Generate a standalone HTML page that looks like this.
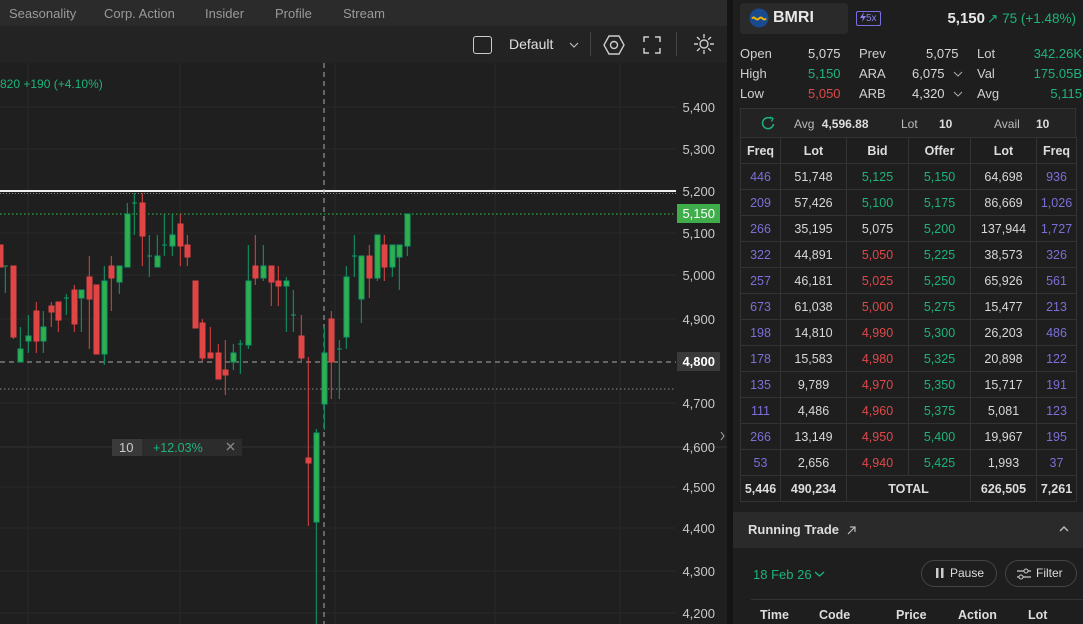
<!DOCTYPE html>
<html><head><meta charset="utf-8"><style>
*{box-sizing:border-box;margin:0;padding:0}
body{width:1083px;height:624px;overflow:hidden;background:#141414;font-family:"Liberation Sans",sans-serif;color:#ddd;position:relative;font-size:13px}
.abs{position:absolute;white-space:nowrap}
.tabs{left:0;top:0;width:727px;height:26px;background:#2b2b2b;}
.tabs span{position:absolute;top:6px;font-size:13px;color:#9a9a9a}
.tb{left:0;top:26px;width:727px;height:37px;background:#232323}
.chart{left:0;top:63px;width:727px;height:561px;background:#1f1f1f}
.rp{left:733px;top:0;width:350px;height:624px;background:#1e1e1e}
.q td{height:26px;border:1px solid #333;text-align:center;font-size:12.5px}
table{border-collapse:collapse}
.p{color:#7b6fd8}.g{color:#1db47a}.r{color:#e04848}.w{color:#d8d8d8}
.lbl{color:#d0d0d0}
</style></head><body>
<div class="abs tabs"><span style="left:9px">Seasonality</span><span style="left:104px">Corp. Action</span><span style="left:205px">Insider</span><span style="left:275px">Profile</span><span style="left:343px">Stream</span></div>
<div class="abs tb">
<div class="abs" style="left:473px;top:10px;width:19px;height:18px;border:1.5px solid #ccc;border-radius:3px"></div>
<span class="abs" style="left:509px;top:10px;font-size:14px;color:#e0e0e0">Default</span>
<svg class="abs" style="left:568px;top:14px" width="12" height="10"><path d="M2 3l4 4 4-4" stroke="#bbb" fill="none" stroke-width="1.2"/></svg>
<div class="abs" style="left:590px;top:6px;width:1px;height:24px;background:#444"></div>
<svg class="abs" style="left:601px;top:7px" width="26" height="24"><path d="M8 3h10l5 9-5 9H8L3 12z" stroke="#ccc" fill="none" stroke-width="1.4"/><circle cx="13" cy="12" r="3.5" stroke="#ccc" fill="none" stroke-width="1.4"/></svg>
<svg class="abs" style="left:642px;top:9px" width="20" height="20"><path d="M2 7V2h5M13 2h5v5M18 13v5h-5M7 18H2v-5" stroke="#ccc" fill="none" stroke-width="1.5"/></svg>
<div class="abs" style="left:676px;top:6px;width:1px;height:24px;background:#444"></div>
<svg class="abs" style="left:692px;top:6px" width="24" height="24"><circle cx="12" cy="12" r="4" stroke="#ccc" fill="none" stroke-width="1.4"/><path d="M12 2v4M12 18v4M2 12h4M18 12h4M5 5l2.8 2.8M16.2 16.2L19 19M5 19l2.8-2.8M16.2 7.8L19 5" stroke="#ccc" stroke-width="1.4"/></svg>
</div>
<div class="abs chart"></div>
<svg class="abs" style="left:0;top:63px" width="727" height="561" viewBox="0 63 727 561">
<g stroke="#292929" stroke-width="1">
<line x1="0" y1="107" x2="676" y2="107"/><line x1="0" y1="149" x2="676" y2="149"/><line x1="0" y1="233" x2="676" y2="233"/><line x1="0" y1="275" x2="676" y2="275"/><line x1="0" y1="319" x2="676" y2="319"/><line x1="0" y1="403" x2="676" y2="403"/><line x1="0" y1="447" x2="727" y2="447" stroke="#333"/><line x1="0" y1="487" x2="676" y2="487"/><line x1="0" y1="528" x2="676" y2="528"/><line x1="0" y1="571" x2="676" y2="571"/><line x1="0" y1="613" x2="676" y2="613"/>
<line x1="28" y1="63" x2="28" y2="624"/><line x1="180" y1="63" x2="180" y2="624"/><line x1="335" y1="63" x2="335" y2="624"/><line x1="495" y1="63" x2="495" y2="624"/><line x1="620" y1="63" x2="620" y2="624"/>
</g>
<line x1="0" y1="191" x2="676" y2="191" stroke="#eee" stroke-width="2"/>
<line x1="0" y1="193.5" x2="676" y2="193.5" stroke="#888" stroke-dasharray="1 2"/>
<line x1="0" y1="214" x2="676" y2="214" stroke="#3bbf4d" stroke-dasharray="1.5 2.5"/>
<line x1="0" y1="389" x2="676" y2="389" stroke="#888" stroke-dasharray="1.5 2.5"/>
<line x1="0" y1="362" x2="676" y2="362" stroke="#aaa" stroke-dasharray="5 4"/>
<line x1="324" y1="63" x2="324" y2="624" stroke="#aaa" stroke-dasharray="5 4"/>
<g stroke="#e04545" stroke-width="1" fill="#e04545">
<rect x="-2" y="245" width="5" height="22"/>
<line x1="13.3" y1="266" x2="13.3" y2="339"/><rect x="11" y="266" width="5" height="71"/>
<line x1="36.3" y1="302" x2="36.3" y2="353"/><rect x="34" y="311" width="5" height="30"/>
<line x1="51.3" y1="302" x2="51.3" y2="327"/><rect x="49" y="306" width="5" height="6"/>
<line x1="58.3" y1="302" x2="58.3" y2="332"/><rect x="56" y="302" width="5" height="18"/>
<line x1="74.3" y1="285" x2="74.3" y2="332"/><rect x="72" y="290" width="5" height="34"/>
<line x1="89.3" y1="256" x2="89.3" y2="349"/><rect x="87" y="277" width="5" height="22"/>
<rect x="94" y="285" width="5" height="69"/>
<line x1="111.3" y1="256" x2="111.3" y2="311"/><rect x="109" y="266" width="5" height="12"/>
<line x1="142.3" y1="193" x2="142.3" y2="266"/><rect x="140" y="203" width="5" height="33"/>
<line x1="180.3" y1="214" x2="180.3" y2="266"/><rect x="178" y="224" width="5" height="22"/>
<line x1="187.3" y1="235" x2="187.3" y2="266"/><rect x="185" y="245" width="5" height="12"/>
<rect x="193" y="281" width="5" height="47"/>
<line x1="202.3" y1="319" x2="202.3" y2="361"/><rect x="200" y="323" width="5" height="35"/>
<line x1="210.3" y1="327" x2="210.3" y2="358"/><rect x="208" y="353" width="5" height="5"/>
<line x1="218.3" y1="344" x2="218.3" y2="379"/><rect x="216" y="353" width="5" height="26"/>
<line x1="225.3" y1="340" x2="225.3" y2="395"/><rect x="223" y="370" width="5" height="5"/>
<line x1="255.3" y1="235" x2="255.3" y2="285"/><rect x="253" y="266" width="5" height="12"/>
<line x1="271.3" y1="266" x2="271.3" y2="306"/><rect x="269" y="266" width="5" height="16"/>
<line x1="278.3" y1="266" x2="278.3" y2="306"/><rect x="276" y="281" width="5" height="5"/>
<line x1="301.3" y1="315" x2="301.3" y2="361"/><rect x="299" y="336" width="5" height="22"/>
<line x1="308.3" y1="357" x2="308.3" y2="526"/><rect x="306" y="458" width="5" height="5"/>
<line x1="331.3" y1="311" x2="331.3" y2="399"/><rect x="329" y="319" width="5" height="43"/>
<line x1="369.3" y1="245" x2="369.3" y2="298"/><rect x="367" y="256" width="5" height="22"/>
<line x1="384.3" y1="235" x2="384.3" y2="281"/><rect x="382" y="245" width="5" height="22"/>
</g>
<g stroke="#0f9d6a" stroke-width="1" fill="#2fb04a">
<line x1="5.3" y1="266" x2="5.3" y2="293"/><line x1="3" y1="266" x2="8" y2="266"/>
<line x1="20.3" y1="327" x2="20.3" y2="362"/><rect x="18" y="349" width="5" height="13"/>
<line x1="28.3" y1="315" x2="28.3" y2="353"/><rect x="26" y="336" width="5" height="5"/>
<line x1="43.3" y1="311" x2="43.3" y2="353"/><rect x="41" y="327" width="5" height="14"/>
<line x1="66.3" y1="294" x2="66.3" y2="315"/><line x1="64" y1="298" x2="69" y2="298"/>
<line x1="81.3" y1="290" x2="81.3" y2="332"/><rect x="79" y="290" width="5" height="8"/>
<line x1="104.3" y1="266" x2="104.3" y2="365"/><rect x="102" y="281" width="5" height="73"/>
<line x1="119.3" y1="266" x2="119.3" y2="294"/><rect x="117" y="266" width="5" height="16"/>
<line x1="127.3" y1="203" x2="127.3" y2="267"/><rect x="125" y="214" width="5" height="53"/>
<line x1="134.3" y1="193" x2="134.3" y2="235"/><line x1="132" y1="203" x2="137" y2="203"/>
<line x1="149.3" y1="235" x2="149.3" y2="277"/><line x1="147" y1="256" x2="152" y2="256"/>
<line x1="157.3" y1="235" x2="157.3" y2="267"/><rect x="155" y="256" width="5" height="11"/>
<line x1="164.3" y1="214" x2="164.3" y2="256"/><line x1="162" y1="245" x2="167" y2="245"/>
<line x1="172.3" y1="214" x2="172.3" y2="256"/><rect x="170" y="235" width="5" height="11"/>
<line x1="233.3" y1="344" x2="233.3" y2="370"/><rect x="231" y="353" width="5" height="9"/>
<line x1="240.3" y1="340" x2="240.3" y2="374"/><line x1="238" y1="344" x2="243" y2="344"/>
<line x1="248.3" y1="245" x2="248.3" y2="349"/><rect x="246" y="281" width="5" height="64"/>
<line x1="263.3" y1="245" x2="263.3" y2="281"/><rect x="261" y="266" width="5" height="12"/>
<line x1="286.3" y1="277" x2="286.3" y2="332"/><rect x="284" y="281" width="5" height="5"/>
<line x1="293.3" y1="290" x2="293.3" y2="332"/><line x1="291" y1="315" x2="296" y2="315"/>
<line x1="316.3" y1="429" x2="316.3" y2="624"/><rect x="314" y="433" width="5" height="89"/>
<line x1="324.3" y1="327" x2="324.3" y2="430"/><rect x="322" y="353" width="5" height="51"/>
<line x1="339.3" y1="340" x2="339.3" y2="399"/><line x1="337" y1="349" x2="342" y2="349"/>
<line x1="346.3" y1="266" x2="346.3" y2="349"/><rect x="344" y="277" width="5" height="60"/>
<line x1="354.3" y1="235" x2="354.3" y2="277"/><line x1="352" y1="256" x2="357" y2="256"/>
<line x1="361.3" y1="256" x2="361.3" y2="323"/><rect x="359" y="256" width="5" height="43"/>
<line x1="377.3" y1="235" x2="377.3" y2="281"/><rect x="375" y="235" width="5" height="43"/>
<line x1="392.3" y1="245" x2="392.3" y2="277"/><rect x="390" y="245" width="5" height="22"/>
<line x1="399.3" y1="245" x2="399.3" y2="290"/><rect x="397" y="245" width="5" height="12"/>
<line x1="407.3" y1="214" x2="407.3" y2="256"/><rect x="405" y="214" width="5" height="32"/>
</g>
<g font-family="Liberation Sans" font-size="13" fill="#c8c8c8" text-anchor="end">
<text x="715" y="112">5,400</text><text x="715" y="154">5,300</text><text x="715" y="196">5,200</text><text x="715" y="238">5,100</text><text x="715" y="280">5,000</text><text x="715" y="324">4,900</text><text x="715" y="408">4,700</text><text x="715" y="452">4,600</text><text x="715" y="492">4,500</text><text x="715" y="533">4,400</text><text x="715" y="576">4,300</text><text x="715" y="618">4,200</text>
</g>
<rect x="677" y="204" width="43" height="19" fill="#3fae4a"/>
<text x="715" y="218" font-family="Liberation Sans" font-size="13" fill="#fff" text-anchor="end">5,150</text>
<rect x="677" y="352" width="43" height="19" fill="#3a3a3a"/>
<text x="715" y="366" font-family="Liberation Sans" font-size="13" fill="#fff" text-anchor="end" font-weight="bold">4,800</text>
<text x="0" y="88" font-family="Liberation Sans" font-size="12" fill="#1db47a">820  +190 (+4.10%)</text>
<rect x="112" y="439" width="30" height="17" fill="#3a3a3a"/>
<rect x="142" y="439" width="100" height="17" fill="#2c2c2c"/>
<text x="119" y="452" font-family="Liberation Sans" font-size="13" fill="#ccc">10</text>
<text x="153" y="452" font-family="Liberation Sans" font-size="12.5" fill="#1db47a">+12.03%</text>
<path d="M227 443l7 7M234 443l-7 7" stroke="#888" stroke-width="1.3"/>
<path d="M721 432l3 4-3 4" stroke="#aaa" fill="none"/>
</svg>

<div class="abs rp">
<div class="abs" style="left:7px;top:3px;width:108px;height:31px;background:#2a2a2a;border-radius:4px"></div>
<svg class="abs" style="left:16px;top:8px" width="20" height="20"><circle cx="10" cy="10" r="9.5" fill="#1a4a8e"/><path d="M3 10.5q1.75-2 3.5 0t3.5 0 3.5 0 3.5 0" stroke="#f5b500" stroke-width="2" fill="none"/></svg>
<span class="abs" style="left:40px;top:9px;font-size:16px;font-weight:bold;color:#e8e8e8">BMRI</span>
<div class="abs" style="left:123px;top:11px;width:25px;height:15px;border:1px solid #7a6fe0;border-radius:2px;font-size:10px;color:#8a80f0;line-height:13px;padding-left:3px"><svg width="6" height="10" style="vertical-align:-1px"><path d="M4 0L0 6h3l-1 4 4-6H3z" fill="#8a80f0"/></svg>5x</div>
<span class="abs" style="right:98px;top:10px;font-size:15px;font-weight:bold;color:#e8e8e8">5,150</span>
<span class="abs" style="right:7px;top:11px;font-size:13.5px;color:#1db47a">↗ 75 (+1.48%)</span>

<div class="abs" style="left:7px;top:44px;width:340px;height:60px;font-size:13px;line-height:20px">
<span class="abs lbl" style="left:0">Open</span><span class="abs w" style="left:68px">5,075</span><span class="abs lbl" style="left:119px">Prev</span><span class="abs w" style="left:186px">5,075</span><span class="abs lbl" style="left:237px">Lot</span><span class="abs g" style="right:-2px">342.26K</span>
<span class="abs lbl" style="left:0;top:20px">High</span><span class="abs g" style="left:68px;top:20px">5,150</span><span class="abs lbl" style="left:119px;top:20px">ARA</span><span class="abs w" style="left:172px;top:20px">6,075</span><span class="abs lbl" style="left:237px;top:20px">Val</span><span class="abs g" style="right:-2px;top:20px">175.05B</span>
<span class="abs lbl" style="left:0;top:40px">Low</span><span class="abs r" style="left:68px;top:40px">5,050</span><span class="abs lbl" style="left:119px;top:40px">ARB</span><span class="abs w" style="left:172px;top:40px">4,320</span><span class="abs lbl" style="left:237px;top:40px">Avg</span><span class="abs g" style="right:-2px;top:40px">5,115</span>
<svg class="abs" style="left:213px;top:26px" width="10" height="8"><path d="M1 2l4 4 4-4" stroke="#aaa" fill="none"/></svg>
<svg class="abs" style="left:213px;top:46px" width="10" height="8"><path d="M1 2l4 4 4-4" stroke="#aaa" fill="none"/></svg>
</div>

<div class="abs" style="left:7px;top:108px;width:336px;height:30px;border:1px solid #333;background:#232323;font-size:12px">
<svg class="abs" style="left:20px;top:7px" width="14" height="14"><path d="M10 2.5A5.5 5.5 0 1 0 12.5 8" stroke="#1db47a" fill="none" stroke-width="1.5"/><path d="M9 1l3 1.5-1.5 3" stroke="#1db47a" fill="none" stroke-width="1.3"/></svg>
<span class="abs" style="left:53px;top:8px;color:#bbb">Avg <b style="color:#ddd;margin-left:4px">4,596.88</b></span>
<span class="abs" style="left:160px;top:8px;color:#bbb">Lot</span><b class="abs" style="left:198px;top:8px;color:#ddd">10</b>
<span class="abs" style="left:253px;top:8px;color:#bbb">Avail</span><b class="abs" style="left:295px;top:8px;color:#ddd">10</b>
</div>

<table class="abs q" style="left:7px;top:137px;width:337px">
<tr style="font-weight:bold;color:#ddd"><td style="width:40px;height:25px">Freq</td><td style="width:66px">Lot</td><td style="width:62px">Bid</td><td style="width:62px">Offer</td><td style="width:66px">Lot</td><td style="width:40px">Freq</td></tr>
<tr><td class="p">446</td><td class="w">51,748</td><td class="g">5,125</td><td class="g">5,150</td><td class="w">64,698</td><td class="p">936</td></tr>
<tr><td class="p">209</td><td class="w">57,426</td><td class="g">5,100</td><td class="g">5,175</td><td class="w">86,669</td><td class="p">1,026</td></tr>
<tr><td class="p">266</td><td class="w">35,195</td><td class="w">5,075</td><td class="g">5,200</td><td class="w">137,944</td><td class="p">1,727</td></tr>
<tr><td class="p">322</td><td class="w">44,891</td><td class="r">5,050</td><td class="g">5,225</td><td class="w">38,573</td><td class="p">326</td></tr>
<tr><td class="p">257</td><td class="w">46,181</td><td class="r">5,025</td><td class="g">5,250</td><td class="w">65,926</td><td class="p">561</td></tr>
<tr><td class="p">673</td><td class="w">61,038</td><td class="r">5,000</td><td class="g">5,275</td><td class="w">15,477</td><td class="p">213</td></tr>
<tr><td class="p">198</td><td class="w">14,810</td><td class="r">4,990</td><td class="g">5,300</td><td class="w">26,203</td><td class="p">486</td></tr>
<tr><td class="p">178</td><td class="w">15,583</td><td class="r">4,980</td><td class="g">5,325</td><td class="w">20,898</td><td class="p">122</td></tr>
<tr><td class="p">135</td><td class="w">9,789</td><td class="r">4,970</td><td class="g">5,350</td><td class="w">15,717</td><td class="p">191</td></tr>
<tr><td class="p">111</td><td class="w">4,486</td><td class="r">4,960</td><td class="g">5,375</td><td class="w">5,081</td><td class="p">123</td></tr>
<tr><td class="p">266</td><td class="w">13,149</td><td class="r">4,950</td><td class="g">5,400</td><td class="w">19,967</td><td class="p">195</td></tr>
<tr><td class="p">53</td><td class="w">2,656</td><td class="r">4,940</td><td class="g">5,425</td><td class="w">1,993</td><td class="p">37</td></tr>
<tr style="font-weight:bold;color:#ddd"><td>5,446</td><td>490,234</td><td colspan="2">TOTAL</td><td>626,505</td><td>7,261</td></tr>
</table>

<div class="abs" style="left:0;top:512px;width:350px;height:36px;background:#2a2a2a">
<span class="abs" style="left:15px;top:10px;font-size:13px;font-weight:bold;color:#ddd">Running Trade</span>
<svg class="abs" style="left:114px;top:13px" width="10" height="10"><path d="M1 9l7-7M3 2h5v5" stroke="#bbb" fill="none" stroke-width="1.2"/></svg>
<svg class="abs" style="left:325px;top:12px" width="12" height="10"><path d="M2 7l4-4 4 4" stroke="#bbb" fill="none" stroke-width="1.4"/></svg>
</div>
<span class="abs" style="left:20px;top:567px;font-size:13px;color:#1db47a">18 Feb 26</span>
<svg class="abs" style="left:81px;top:570px" width="11" height="8"><path d="M1 2l4.5 4 4.5-4" stroke="#1db47a" fill="none" stroke-width="1.4"/></svg>
<div class="abs" style="left:188px;top:560px;width:76px;height:27px;border:1px solid #444;border-radius:14px;font-size:12px;color:#ddd;line-height:25px;padding-left:14px"><svg width="8" height="10" style="vertical-align:-1px;margin-right:6px"><rect x="0" y="0" width="2.5" height="10" fill="#ccc"/><rect x="5" y="0" width="2.5" height="10" fill="#ccc"/></svg>Pause</div>
<div class="abs" style="left:272px;top:560px;width:72px;height:27px;border:1px solid #444;border-radius:14px;font-size:12px;color:#ddd;line-height:25px;padding-left:30px">Filter
<svg class="abs" style="left:10px;top:6px" width="16" height="14"><path d="M1 4h14M1 10h14" stroke="#ccc" stroke-width="1.2"/><circle cx="10" cy="4" r="2" fill="#1e1e1e" stroke="#ccc"/><circle cx="5" cy="10" r="2" fill="#1e1e1e" stroke="#ccc"/></svg></div>
<div class="abs" style="left:18px;top:599px;width:332px;height:1px;background:#333"></div>
<div class="abs" style="top:608px;left:0;font-size:12.5px;font-weight:bold;color:#ddd;width:350px">
<span class="abs" style="left:27px">Time</span><span class="abs" style="left:86px">Code</span><span class="abs" style="left:163px">Price</span><span class="abs" style="left:225px">Action</span><span class="abs" style="left:295px">Lot</span></div>
</div>
</body></html>
